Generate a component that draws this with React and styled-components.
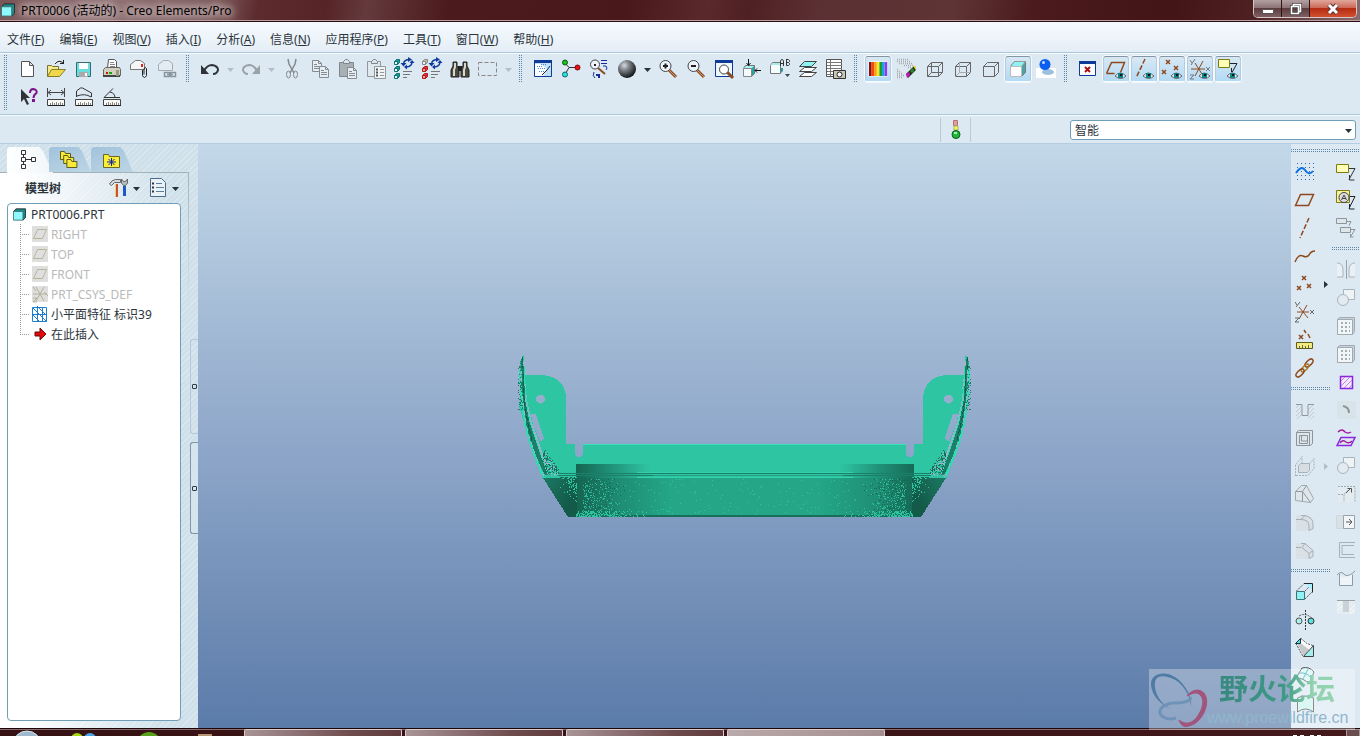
import styled, { createGlobalStyle, css } from 'styled-components';

const GlobalStyle = createGlobalStyle`
    * {
        box-sizing: border-box;
    }
    body {
        margin: 0;
        overflow: hidden;
        font-family: "Noto Sans", "Noto Sans CJK SC", sans-serif;
        font-size: 12px;
        color: #2b343b;
    }
    button {
        font: inherit;
        color: inherit;
        border: none;
        background: none;
        padding: 0;
    }
`;

const Page = styled.div`
    height: 100vh;
    display: flex;
    flex-direction: column;
    background: #dce9f3;
`;

const TitleBar = styled.header`
    display: flex;
    justify-content: space-between;
    height: 22px;
    flex: none;
    border-bottom: 1px solid #2a0c10;
    box-shadow: inset 0 -1px 0 #b9a0a2;
    background: linear-gradient(100deg, #7a5558 0%, #8f7072 8%, #7d5a5c 16%, #5c2b2e 19%, #562427 24%, #643a3c 27%, #4b1a1c 33%, #48181a 46%, #59292b 52%, #4f2023 55%, #5b3032 60%, #5f3435 70%, #4a1a1c 76%, #431517 86%, #4e2022 92%, #8a6a6c 100%);
`;

const Title = styled.h1`
    display: flex;
    align-items: center;
    gap: 6px;
    margin: 0;
    padding-left: 1px;
    height: 20px;
    font-size: 12px;
    font-weight: 400;
    color: #000;
    text-shadow: 0 0 6px #cbb9ba, 0 0 8px #cbb9ba, 0 0 10px #cbb9ba, 0 0 12px #cbb9ba;
`;

const WindowButtons = styled.div`
    display: flex;
    height: 18px;
    margin-right: 3px;
    border: 1px solid #d5c6c8;
    border-top: none;
    border-radius: 0 0 5px 5px;
    overflow: hidden;
`;

const WindowButton = styled.button`
    display: flex;
    align-items: center;
    justify-content: center;
    width: ${(props) => (props.$close ? '46px' : '28px')};
    border-right: 1px solid #2f1315;
    background: ${(props) =>
        props.$close
            ? 'linear-gradient(#e0a79b, #cc6a58 45%, #b52c12 50%, #d2502f)'
            : 'linear-gradient(#b3a0a2, #8d7476 45%, #5d3c3f 50%, #7e6063)'};
    &:last-child {
        border-right: none;
    }
`;

const MenuBar = styled.nav`
    display: flex;
    align-items: center;
    height: 31px;
    flex: none;
    gap: 15px;
    padding: 6px 7px 0;
    background: linear-gradient(#f5fafe, #e5eef6);
    border-bottom: 1px solid #a9c6da;
`;

const MenuItem = styled.button`
    line-height: 20px;
    white-space: nowrap;
`;

const Toolbars = styled.div`
    display: flex;
    flex: none;
    height: 62px;
    padding-top: 1px;
    border-top: 1px solid #f8fbfd;
    border-bottom: 1px solid #a9c6da;
`;

const Grip = styled.div`
    flex: none;
    width: 14px;
    padding: 0 7px 0 4px;
    height: ${(props) => (props.$tall ? '56px' : '28px')};
    background: conic-gradient(from 270deg at 1px 1px, #5d86a3 90deg, transparent 0) 0 0 / 2px 2px content-box;
`;

const SideGrip = styled.div`
    flex: none;
    height: 14px;
    padding: 5px 0 6px;
    background: conic-gradient(from 270deg at 1px 1px, #5d86a3 90deg, transparent 0) 0 0 / 2px 2px content-box;
`;

const ToolRows = styled.div`
    display: flex;
    flex-direction: column;
`;

const ToolRow = styled.div`
    display: flex;
    height: 28px;
`;

const ToolButton = styled.button`
    display: flex;
    align-items: center;
    justify-content: center;
    flex: none;
    width: 26px;
    height: 26px;
    margin: 1px;
    ${(props) =>
        props.$on &&
        css`
            border: 1px solid #8fa3b1;
            border-color: #8496a3 #b5cbdc #f6fbff #b5cbdc;
            border-radius: 3px;
            box-shadow: 0 0 0 1px #f4f9fd;
            background: linear-gradient(#d8e8f4, #b3daf5);
        `}
`;

const ArrowButton = styled.button`
    display: flex;
    align-items: center;
    justify-content: center;
    flex: none;
    width: 13px;
    height: 28px;
`;

const StatusRow = styled.div`
    display: flex;
    align-items: center;
    justify-content: flex-end;
    height: 29px;
    flex: none;
    padding-right: 4px;
    border-top: 1px solid #f8fbfd;
    border-bottom: 1px solid #b5cde0;
`;

const Light = styled.div`
    display: flex;
    align-items: center;
    justify-content: center;
    width: 31px;
    height: 24px;
    margin-right: 99px;
    border: 1px solid #b9cad6;
    border-width: 0 1px;
`;

const FilterBox = styled.label`
    position: relative;
    width: 286px;
    height: 20px;
    svg {
        position: absolute;
        right: 4px;
        top: 7px;
        pointer-events: none;
    }
`;

const FilterSelect = styled.select`
    appearance: none;
    display: block;
    width: 100%;
    height: 20px;
    padding: 1px 4px 0;
    font: inherit;
    color: inherit;
    background: #fff;
    border: 1px solid #6f9fb8;
    border-radius: 3px;
`;

const Main = styled.main`
    display: flex;
    flex: 1;
    min-height: 0;
`;

const Sidebar = styled.aside`
    display: flex;
    flex: none;
    width: 198px;
    padding-top: 3px;
    background: repeating-linear-gradient(135deg, #dae8ef 0 1px, #cfe0ea 1px 4px);
`;

const TreePanel = styled.div`
    display: flex;
    flex-direction: column;
    width: 189px;
`;

const Tabs = styled.div`
    display: flex;
    height: 26px;
    flex: none;
    padding-left: 7px;
    border-bottom: 1px solid #a3b1ba;
`;

const Tab = styled.button`
    display: flex;
    align-items: center;
    width: ${(props) => (props.$active ? '46px' : '42px')};
    height: ${(props) => (props.$active ? '26px' : '25px')};
    margin-right: ${(props) => (props.$active ? '-4px' : '0')};
    padding-left: ${(props) => (props.$active ? '11px' : '10px')};
    border-radius: 4px 0 0 0;
    clip-path: polygon(0 0, 70% 0, 78% 15%, 100% 100%, 0 100%);
    background: ${(props) => (props.$active ? 'linear-gradient(90deg, #fff, #f1f6f9)' : 'linear-gradient(160deg, #a2c3dc, #bcd5e4)')};
`;

const TreeBody = styled.section`
    display: flex;
    flex-direction: column;
    flex: 1;
    padding: 0 7px 7px;
    background: linear-gradient(90deg, #fff 10%, #fff0 90%) no-repeat;
    border-right: 1px solid #a9bcc8;
    border-image: linear-gradient(#a3b1ba, #c5d6e0 15%, transparent 25%) 1;
    border-width: 0 1px 0 0;
`;

const TreeHeader = styled.div`
    display: flex;
    align-items: center;
    height: 30px;
    padding: 0 2px 0 18px;
    h2 {
        flex: 1;
        margin: 0;
        font-size: 12px;
        font-weight: 700;
    }
`;

const HeaderButton = styled.button`
    display: flex;
    align-items: center;
    gap: 4px;
    margin-left: 8px;
`;

const TreeBox = styled.div`
    flex: 1;
    width: 174px;
    padding: 0 4px;
    background: #fff;
    border: 1px solid #6f9fb8;
    border-radius: 4px;
`;

const TreeRoot = styled.div`
    display: flex;
    align-items: center;
    gap: 5px;
    height: 20px;
    padding-left: 1px;
`;

const TreeList = styled.ul`
    list-style: none;
    margin: 0 0 0 8px;
    padding: 0;
    background: linear-gradient(#999 50%, transparent 0) 0 0 / 1px 2px repeat-y;
`;

const TreeItem = styled.li`
    display: flex;
    align-items: center;
    gap: 1px;
    height: 20px;
    white-space: nowrap;
    color: ${(props) => (props.$dim ? '#b9b9b9' : '#2b343b')};
    &::before {
        content: "";
        width: 9px;
        height: 1px;
        background: repeating-linear-gradient(90deg, #999 0 1px, transparent 1px 2px);
    }
    &:last-child {
        background: linear-gradient(#fff, #fff) 0 11px / 1px 9px no-repeat;
    }
`;

const Sashes = styled.div`
    display: flex;
    flex-direction: column;
    align-items: flex-end;
    gap: 8px;
    width: 9px;
    padding-top: 192px;
`;

const Sash = styled.div`
    display: flex;
    align-items: center;
    justify-content: center;
    width: 8px;
    height: ${(props) => (props.$strong ? '92px' : '95px')};
    border: 1px solid ${(props) => (props.$strong ? '#7e96a6' : '#b2cbdc')};
    border-right: none;
    border-radius: 3px 0 0 3px;
    background: ${(props) => (props.$strong ? '#d5e5ee' : 'transparent')};
    &::before {
        content: "";
        width: 3px;
        height: 3px;
        border: 1px solid #2c3b48;
        border-radius: 1px;
    }
`;

const Viewport = styled.div`
    display: flex;
    align-items: center;
    justify-content: center;
    flex: 1;
    background: linear-gradient(#c3d8e8, #90a8ca 50%, #5b7ba9);
`;

const SideTools = styled.aside`
    display: flex;
    flex: none;
    width: 69px;
    gap: 1px;
`;

const SideColumn = styled.div`
    width: ${(props) => props.$width};
`;

const Watermark = styled.div`
    position: absolute;
    right: 5px;
    bottom: 6px;
    display: flex;
    width: 206px;
    height: 61px;
    background: rgba(255, 255, 255, 0.32);
    svg {
        flex: none;
    }
`;

const WatermarkText = styled.div`
    display: flex;
    flex-direction: column;
    margin-left: -2px;
    strong {
        padding-left: 12px;
        font-size: 29px;
        line-height: 40px;
        font-weight: 700;
        color: transparent;
        background: linear-gradient(90deg, #37857f, #3e9a85 55%, #93d3b1 75%);
        background-clip: text;
    }
    span {
        font-family: "Liberation Sans", sans-serif;
        font-size: 16px;
        line-height: 18px;
        color: #8fb6cc;
    }
`;

const Taskbar = styled.footer`
    display: flex;
    height: 8px;
    flex: none;
    overflow: hidden;
    border-top: 1px solid #1c0507;
    box-shadow: inset 0 1px 0 #8c6c6e;
    background: linear-gradient(90deg, #371215, #3a1518 60%, #43191c);
`;

const Launchers = styled.div`
    display: flex;
    width: 244px;
    padding: 1px 0 0 11px;
`;

const Task = styled.div`
    width: 158px;
    margin-right: 3px;
    border: 1px solid #d9cccd;
    border-bottom: none;
    border-radius: 2px 2px 0 0;
    background: ${(props) =>
        props.$light ? 'linear-gradient(90deg, #b9a9aa, #a58f91)' : 'linear-gradient(90deg, #a89495, #6d4a4c 70%, #5f3b3d)'};
`;

const Tray = styled.div`
    display: flex;
    margin-left: auto;
    gap: 24px;
`;

const ShowDesktop = styled.button`
    width: 14px;
    border: 1px solid #a89899;
    border-bottom: none;
    background: #6b4d50;
`;

/* ---- icons, 20 x 20 grid ---- */

const brown = '#8e4a1e';
const ln = (d, stroke = '#555', extra = {}) => <path d={d} fill="none" stroke={stroke} {...extra} />;
const dash = { strokeDasharray: '2 1' };

const smallCube = (dy, face, side, line) => (
    <g transform={`translate(0 ${dy})`}>
        <path d="M.5 2.500l2-2h3v3l-2 2z" fill={side} stroke={line} />
        <path d="M.5 2.500h3v3h-3z" fill={face} stroke={line} />
    </g>
);
const ruler = (
    <>
        <path d="M1.500 12.500h17v6h-17z" fill="#f8f8f4" stroke="#444" />
        <path d="M2 18.500h17" stroke="#222" />
        {ln('M4.500 18v-2M6.500 18v-3M8.500 18v-2M10.500 18v-3M12.500 18v-2M14.500 18v-3M16.500 18v-2', '#888')}
    </>
);
const eye = (
    <>
        <path d="M9 17q5-6 11 0q-5 5-11 0z" fill="#e8e8e8" stroke="#666" />
        <path d="M12 14h5v5h-5z" fill="#128282" />
        <path d="M14 15h2v2h-2z" fill="#013" />
    </>
);
const magnifier = (
    <>
        <path d="M11 11l7 7" stroke="#8a4c24" strokeWidth="3" />
        <path d="M11 11l7 7" stroke="#d39a70" />
        <circle cx="7.500" cy="7" r="5.500" fill="#eef5fa" stroke="#444" />
    </>
);
const x = (cx, cy, color = brown) => ln(`M${cx - 2} ${cy - 2}l4 4M${cx + 2} ${cy - 2}l-4 4`, color, { strokeWidth: 1.5 });
const page = (px, py, c) => (
    <g transform={`translate(${px} ${py})`} stroke={c} fill="#e6eef3">
        <path d="M.5.5h6l3 3v8h-9zM6.500.5v3h3" />
        <path d="M2 4.500h3M2 6.500h6M2 8.500h6" />
    </g>
);
const wire = (
    <path d="M3.500 7.500l4-4h11v10l-4 4h-11zM3.500 7.500h11v10M14.500 7.500l4-4" fill="none" stroke="#666" />
);
const regen = (face, side, line) => (
    <>
        {smallCube(0, '#e8f8f8', side === '#e03030' ? '#bbb' : side, side === '#e03030' ? '#888' : line)}
        {smallCube(7, face, side, line)}
        {smallCube(14, face, side, line)}
        {ln('M9.500 5q.5-4 5-4.500M18 3q0 4-5 5', '#103d9c', { strokeWidth: 1.5 })}
        <path d="M14-2l4 2.500-4 2.500zM6.500 4h6l-3 3.500zM15.500 4h5l-2.500-3zM13 5.500v5l-3-2.500z" fill="#103d9c" />
        {ln('M9 12.500h9M9 15.500h7M9 18.500h4', '#777')}
    </>
);
const hatch = (c) => ln('M1 8l3-3M1 12l6-6M1 16l6-6M2 19l5-5M13 10l5-5M13 14l6-6M13 18l6-6M16 19l3-3', c);

const icons = {
    part: (
        <>
            <path d="M3.500 6.500l3-3h11v10l-3 3" fill="#178c8c" stroke="#222" />
            <path d="M3.500 6.500h11v10h-11z" fill="#8ff8fb" stroke="#3a6f70" />
        </>
    ),
    newFile: <path d="M3.500 2.500h8l4 4v11h-12zM11.500 2.500v4h4" fill="#fff" stroke="#555" />,
    open: (
        <>
            <path d="M1.500 17.500v-11h4l1 1h6v3" fill="#f7e98e" stroke="#77712b" />
            <path d="M1.500 17.500l4-7h14l-6 7z" fill="#efd84c" stroke="#8a7d1f" />
            {ln('M9 5q4-5 8-1M17.500 1v4M14 4.500h4', '#222')}
        </>
    ),
    save: (
        <>
            <path d="M2.500 3.500h14v14h-14z" fill="#6adede" stroke="#2f6e72" />
            <path d="M5 4h9v6h-9z" fill="#fff" />
            <path d="M5 13h9v5h-9z" fill="#aaa" />
            <path d="M11 14h2v3h-2z" fill="#fff" />
        </>
    ),
    print: (
        <>
            <path d="M5.500 9.500l1-9h6l2 2v7" fill="#fff" stroke="#555" />
            {ln('M8 3.500h4M8 5.500h5M8 7.500h5', '#888')}
            <path d="M1.500 10.500l2-2h14l1 2v6h-17z" fill="#d2cfc0" stroke="#666" />
            <path d="M1 16h17v2h-17z" fill="#444" />
            <path d="M4 13h2v2h-2z" fill="#c11" />
            <path d="M7 13h3v2h-3z" fill="#1a1" />
            <path d="M14 11h3v6h-3z" fill="#9a9782" />
        </>
    ),
    mail: (
        <>
            <path d="M.5 10.500v-5l5-4h5l4 3v6z" fill="#f4f6f7" stroke="#777" />
            <path d="M11 5h2v3h-2z" fill="#d22" />
            <path d="M12.500 11v5.500q2 4 4 0v-7q-1.500-2-2.500 0v6" fill="none" stroke="#222" />
        </>
    ),
    mailLink: (
        <>
            <path d="M.5 11.500v-6l5-4h5l4 3v7z" fill="#e2ecf2" stroke="#a2abb1" />
            <path d="M6.500 13.500h5v4h-5zM12.500 13.500h5v4h-5zM9 15.500h6" fill="none" stroke="#87939b" strokeWidth="1.500" />
        </>
    ),
    undo: (
        <>
            {ln('M4 12q3-6 8-6q6 1 6 5q-1 4-5 4', '#2f3338', { strokeWidth: 2 })}
            <path d="M1 6v9h8z" fill="#2f3338" />
        </>
    ),
    redo: (
        <>
            {ln('M16 12q-3-6-8-6q-6 1-6 5q1 4 5 4', '#9aa2a8', { strokeWidth: 2 })}
            <path d="M19 6v9h-8z" fill="#9aa2a8" />
        </>
    ),
    cut: (
        <>
            {ln('M6 0l1 5l5 9M14 0l-1 5l-5 9', '#83898e', { strokeWidth: 1.5 })}
            <ellipse cx="6.500" cy="15.500" rx="2" ry="3.500" fill="none" stroke="#83898e" />
            <ellipse cx="13.500" cy="15.500" rx="2" ry="3.500" fill="none" stroke="#83898e" />
        </>
    ),
    copy: (
        <>
            {page(2, 1, '#848c92')}
            {page(9, 7, '#848c92')}
        </>
    ),
    paste: (
        <>
            <path d="M1.500 3.500h14v14h-14z" fill="#a9b0b5" stroke="#7f878c" />
            <path d="M5.500 4.500v-2l2-2h2l2 2v2z" fill="#dde5ea" stroke="#7f878c" />
            {page(9, 8, '#848c92')}
        </>
    ),
    pasteSpecial: (
        <>
            <path d="M1.500 2.500h13v15h-13z" fill="#dfe8ee" stroke="#92999e" />
            <path d="M5.500 4.500v-2l2-2h2l2 2v2z" fill="#dde5ea" stroke="#7f878c" />
            <path d="M8.500 7.500h11v12h-11z" fill="#eef3f6" stroke="#92999e" />
            {ln('M10 10.500h2M10 13.500h2M10 16.500h2', '#555', { strokeWidth: 2 })}
            {ln('M14 10.500h4M14 13.500h4M14 16.500h4', '#999')}
        </>
    ),
    regen: regen('#eaffff', '#1a9a94', '#12716e'),
    regenAll: regen('#ff9a9a', '#e03030', '#b31c1c'),
    find: (
        <>
            <path d="M3 3h4v4l2 3v8h-8v-7l2-4zM13 3h4v4l2 4v7h-8v-8l2-3z" fill="#4b4a40" stroke="#222" />
            <path d="M8 7h4v5h-4z" fill="#222" />
            {ln('M5 4v4l-1 3v6M15 4v4l-1 3v6', '#d8d8c8', { strokeWidth: 2 })}
        </>
    ),
    select: ln('M.5 3.500h18v13h-18z', '#888', { strokeDasharray: '4 2' }),
    repaint: (
        <>
            <path d="M1.500 1.500h17v16h-17z" fill="#bfe0f8" stroke="#0d3b96" />
            <path d="M1 1h18v3h-18z" fill="#0d3b96" />
            <path d="M2 17v-12h6l6 5-4 7z" fill="#fff" />
            {ln('M4 7.500h5M5 9.500h8M6 12.500h5M8 5.500h6', '#3a8ee0', { strokeDasharray: '1 1' })}
            {ln('M9 16l5-5M14 11l3-4', '#223')}
        </>
    ),
    spin: (
        <>
            {ln('M4 4l4 4.500h8M8 8.500l-4 7', '#333')}
            <circle cx="4" cy="3.500" r="2.500" fill="#17c21d" stroke="#0a5a0d" />
            <circle cx="16.500" cy="8.500" r="2.500" fill="#e11" stroke="#7a0a0a" />
            <circle cx="4" cy="15.500" r="2.500" fill="#2de0e0" stroke="#0a6a6a" />
        </>
    ),
    orient: (
        <>
            <path d="M9 9l7 6" stroke="#8a4c24" strokeWidth="2" />
            <circle cx="6" cy="5.500" r="4.500" fill="#eef5fa" stroke="#444" />
            <path d="M5 5h2v2h-2z" fill="#222" />
            {ln('M12 1.500h6M12 4.500h6M14 7h3q2 2 0 4M5 13q-2 4 1 6', '#162a9c')}
            <path d="M7 15h4v4h-2v-2h-2z" fill="#162a9c" />
        </>
    ),
    sphere: (
        <>
            <radialGradient id="sphere" cx="0.35" cy="0.3" r="0.7">
                <stop offset="0" stopColor="#d5dade" />
                <stop offset="0.4" stopColor="#7b8186" />
                <stop offset="1" stopColor="#16191c" />
            </radialGradient>
            <circle cx="10" cy="10" r="9" fill="url(#sphere)" />
        </>
    ),
    zoomIn: (
        <>
            {magnifier}
            {ln('M5 7h5M7.500 4.500v5', '#222', { strokeWidth: 2 })}
        </>
    ),
    zoomOut: (
        <>
            {magnifier}
            {ln('M5 7h5', '#222', { strokeWidth: 2 })}
        </>
    ),
    refit: (
        <>
            <path d="M1.500 1.500h17v16h-17z" fill="#eef6fb" stroke="#0d3b96" />
            <path d="M1 1h18v3h-18z" fill="#0d3b96" />
            <path d="M13 13l6 6" stroke="#8a4c24" strokeWidth="3" />
            <circle cx="10" cy="10.500" r="4.500" fill="#fff" stroke="#444" />
        </>
    ),
    reorient: (
        <>
            <path d="M1.500 9.500l2-3h9v8l-3 3" fill="#22a8a2" stroke="#777" />
            <path d="M1.500 9.500h8v8h-8z" fill="#f4fbfb" stroke="#888" />
            <path d="M3 8l1-1h8l-2 2h-8z" fill="#a9f2f2" />
            {ln('M6.500 0v6M4.500 4l2 2.500l2-2.500M19 11.500h-6M15 9.500l-2 2l2 2', '#111')}
        </>
    ),
    savedViews: (
        <>
            <path d="M.5 6.500l2-3h8v11h-10z" fill="#f4fbfb" stroke="#777" />
            <path d="M1 6l2-2h8v2z" fill="#a9ecec" />
            {ln('M10.500 7v-5l1-1.500h1l1 1.500v5M10.500 4.500h3M16.500 0v6.500h2l1-1v-1l-1-1l1-1v-1l-1-1h-2M16.500 3.500h2', '#333')}
            <path d="M15 15h5l-2.500 3z" fill="#444" />
            <path d="M11 9h2v3l-2 2z" fill="#2a9a9a" />
        </>
    ),
    layers: (
        <>
            <path d="M1.500 17.500l5-4h12l-5 4z" fill="#fff" stroke="#444" />
            <path d="M1.500 12.500l5-4h12l-5 4z" fill="#fff" stroke="#444" />
            <path d="M1.500 7.500l5-5h12l-5 5z" fill="#8df3f3" stroke="#444" />
        </>
    ),
    viewMgr: (
        <>
            <path d="M.5.5h15v17h-15z" fill="#fff" stroke="#555" />
            {ln('M1 3.500h15M1 6.500h15M1 9.500h15M1 12.500h7M1 15.500h7M4.500 1v16', '#777')}
            <path d="M7.500 11.500h12v8h-12z" fill="#c9c7b8" stroke="#333" />
            <circle cx="13.500" cy="15.500" r="2.500" fill="#fff" stroke="#222" />
        </>
    ),
    palette: (
        <>
            <path d="M.5 2.500h19v15h-19z" fill="#fff" />
            {['#8c0f0a', '#f4480b', '#ff9b11', '#f6e81a', '#1a9c2b', '#1ba0e8', '#8a3bf0'].map((c, i) => (
                <rect key={c} x={1 + i * 2.6} y="3" width="2.600" height="14" fill={c} />
            ))}
        </>
    ),
    erase: (
        <>
            {ln('M1 .5h12M1 2.500h14M3 4.500h14M8 6.500h9M12 8.500h4M1 10.500h2M1 12.500h4M1 14.500h6M1 16.500h8M1 18.500h6', '#a9abad', { strokeDasharray: '1 1', strokeWidth: 1.5 })}
            <path d="M10 15l8-8 2 4-8 8z" fill="#26331e" />
            <path d="M10 15l3-2 1 3-3 3z" fill="#c015c0" />
            <path d="M14 12l3-3 1 3-2 2z" fill="#2a8c2a" />
            <path d="M17 7h3v4z" fill="#e8d835" />
        </>
    ),
    wireframe: (
        <>
            {wire}
            {ln('M7.500 3.500v10h11M3.500 17.500l4-4', '#666')}
        </>
    ),
    hidden: (
        <>
            {wire}
            {ln('M7.500 3.500v10h11M3.500 17.500l4-4', '#aaa')}
        </>
    ),
    noHidden: wire,
    shaded: (
        <>
            <path d="M2.500 7.500l4-5h11v11l-4 4" fill="#4aa5a5" stroke="#777" />
            <path d="M2.500 7.500l4-5h11l-4 5z" fill="#8ff3f5" stroke="#999" />
            <path d="M2.500 7.500h11v10h-11z" fill="#fff" stroke="#bbb" />
        </>
    ),
    realism: (
        <>
            <path d="M0 9h20v10h-20z" fill="#fff" />
            <ellipse cx="12" cy="13" rx="6" ry="3" fill="#9dbfe0" />
            <circle cx="9" cy="5.500" r="5.500" fill="#0b5ef0" />
            <circle cx="7.500" cy="3.500" r="1.500" fill="#bfe0ff" />
        </>
    ),
    closeWin: (
        <>
            <path d="M1.500 2.500h16v14h-16z" fill="#fff" stroke="#0d3b96" />
            <path d="M1 2h17v3h-17z" fill="#0d3b96" />
            {ln('M7 8l5 5M12 8l-5 5', '#a11', { strokeWidth: 2 })}
        </>
    ),
    planeEye: (
        <>
            {ln('M.5 14.500l5-11h13l-4 10M.5 14.500h8', brown, { strokeWidth: 1.5 })}
            {eye}
        </>
    ),
    axisEye: (
        <>
            {ln('M11 0l-9 19', brown, { strokeDasharray: '5 2', strokeWidth: 1.5 })}
            {eye}
        </>
    ),
    pointEye: (
        <>
            {x(6, 3)}
            {x(2, 13)}
            {x(14, 9)}
            {eye}
        </>
    ),
    csysEye: (
        <>
            {ln('M1 10h14M5 4l7 11M13 2l-8 15', brown)}
            {ln('M0 1l2 3M5 0l-4 6M0 16h4l-4 4h4M16 8l4 4M20 8l-4 4', '#777')}
            {eye}
        </>
    ),
    noteEye: (
        <>
            <path d="M.5.5h11v8h-11z" fill="#ffffb8" stroke="#7c7c10" />
            {ln('M12 4.500h7l-5 9M13.500 9v4', '#222')}
            {eye}
        </>
    ),
    help: (
        <>
            <path d="M3 2v13l3-3 3 6 2-1-3-6h4z" fill="#2f3338" />
            {ln('M12 6q0-4 3.500-4q4 1 3 4q-3 2-3 5', '#7c1288', { strokeWidth: 2 })}
            <path d="M14 12h3v3h-3z" fill="#7c1288" />
        </>
    ),
    measure: (
        <>
            {ruler}
            {ln('M1.500 1v9M18.500 1v9M2 5.500h16M5 3l-3 2.500l3 2.500M15 3l3 2.500l-3 2.500', '#444')}
        </>
    ),
    measureCurve: (
        <>
            {ruler}
            {ln('M2.500 10v-6l4-3h2l9 5v4M3 9q8-3 14 1', '#333')}
        </>
    ),
    measureAngle: (
        <>
            {ruler}
            {ln('M2 10.500h16M2 10.500l9-9M8 5q5 1 5 6', '#333')}
        </>
    ),
    treeTab: ln('M3.500.5h4v4h-4zM3.500 7.500h4v4h-4zM3.500 14.500h4v4h-4zM13.500 7.500h4v4h-4zM5.500 5v2M5.500 12v2M8 9.500h5', '#333'),
    foldersTab: (
        <>
            {[0, 4, 8].map((o) => (
                <path key={o} d={`M${1.5 + o * 0.8} ${9.5 + o}v-8h4l1 2h5v6z`} fill="#f7ea3a" stroke="#5d5a1a" />
            ))}
        </>
    ),
    favTab: (
        <>
            <path d="M2.500 17.500v-13h5l1 2h10v11z" fill="#f9ef35" stroke="#6b6724" />
            {ln('M10.500 8v8M6 12h9M7.500 9l6 6M13.500 9l-6 6', '#14229c')}
        </>
    ),
    tools: (
        <>
            <path d="M.5 6q2-4 6-4.500h5v3h-6l-3 3z" fill="#d5dbdf" stroke="#666" />
            <path d="M6 6h3v13h-3z" fill="#d0502a" />
            <path d="M6 6h1v13h-1z" fill="#e8d27a" />
            <path d="M14 8h3v10h-3z" fill="#1a5ac8" />
            <path d="M12.500 1v4l2 2.500h2l2-2.500v-4l-2 2.500h-2z" fill="#b5bec4" stroke="#666" />
        </>
    ),
    list: (
        <>
            <path d="M2.500.5h11l4 4v14h-15z" fill="#eaf2f8" stroke="#4b6b86" />
            {ln('M8 5.500h6M8 9.500h8M8 13.500h8', '#5a7fa0')}
            {ln('M4 5.500h2M4 9.500h2M4 13.500h2', '#333', { strokeWidth: 2 })}
        </>
    ),
    planeDim: (
        <>
            <path d="M2 2h16v16h-16z" fill="#dfdfdf" />
            {ln('M3.500 14.500l4-9h9l-4 9z', '#b9b59c')}
        </>
    ),
    csysDim: (
        <>
            <path d="M2 2h16v16h-16z" fill="#dfdfdf" />
            {ln('M3 10h14M6 3l8 14M14 3l-8 14M3 3l3 4M3 14h4l-4 4h4M14 8l4 4', '#b5b196')}
        </>
    ),
    facet: (
        <>
            <path d="M2.500 3.500h14v14h-14z" fill="#fff" stroke="#1a7fd0" />
            {ln('M7.500 2v16M12.500 3v15M2 10.500h15M3 4l13 13M8 3l8 8M3 11l7 7', '#1a7fd0')}
        </>
    ),
    insert: <path d="M5 8h5v-4l6 6-6 6v-4h-5z" fill="#e00808" stroke="#6d0a0a" />,
    sketch: (
        <>
            {ln('M2 1.500h17M2 5.500h17M2 9.500h17M2 13.500h17M2 17.500h17', '#2b6aa8', { strokeDasharray: '1 3' })}
            {ln('M1 11q5-8 9-3q4 6 8 1', '#0e72e0', { strokeWidth: 2 })}
        </>
    ),
    plane: ln('M.5 15.500l5-11h13l-5 11z', brown, { strokeWidth: 1.5 }),
    axis: ln('M14 0l-9 20', brown, { strokeDasharray: '5 2', strokeWidth: 1.5 }),
    curve: ln('M0 16q3-8 8-6q4 2 6-1q2-4 6-4', brown, { strokeWidth: 1.5 }),
    points: (
        <>
            {x(9, 4)}
            {x(4, 14)}
            {x(14, 12)}
        </>
    ),
    csys: (
        <>
            {ln('M2 10h12M4 5l9 11M12 3l-8 14', brown)}
            {ln('M0 0l2 3M5 0l-4 5M0 16h4l-4 4h4M15 8l4 4M19 8l-4 4', '#666')}
        </>
    ),
    analysis: (
        <>
            {x(6, 7)}
            {ln('M9 0l2 3M13 4l2 4', brown, { strokeWidth: 1.5 })}
            <path d="M1.500 12.500h16v6h-16z" fill="#f3ea7a" stroke="#5f5a20" />
            {ln('M4.500 18v-2M7.500 18v-3M10.500 18v-2M13.500 18v-3', '#666')}
        </>
    ),
    chain: (
        <>
            <ellipse cx="14" cy="5" rx="5" ry="2.500" transform="rotate(-45 14 5)" fill="none" stroke={brown} strokeWidth="1.500" />
            <ellipse cx="10" cy="10" rx="5" ry="2" transform="rotate(-45 10 10)" fill="none" stroke="#a8791e" strokeWidth="1.500" />
            <ellipse cx="5" cy="15" rx="5" ry="2.500" transform="rotate(-45 5 15)" fill="none" stroke={brown} strokeWidth="1.500" />
        </>
    ),
    hole: (
        <>
            {hatch('#c3cacf')}
            {ln('M1 4.500h6v11h6v-11h6', '#8f989e')}
        </>
    ),
    shell: (
        <>
            <path d="M1.500 4.500l2-2h14v13l-2 2h-14z" fill="#dde6eb" stroke="#8b959b" />
            {ln('M1.500 4.500h13v13M4.500 7.500h8v8h-8zM6.500 7v6h6', '#8b959b')}
        </>
    ),
    rib: (
        <>
            {ln('M1 8.500l6-8v9M1 19.500h12l6-7v-10l-6 7M.5 9v11', '#a9b2b8', { strokeDasharray: '2 1' })}
            <path d="M3.500 9.500l2-2h9v7l-2 2h-9z" fill="#d6dee3" stroke="#aab2b7" />
        </>
    ),
    draft: (
        <>
            <path d="M.5 7.500l6-6h5l7 13-3 4-15-2z" fill="#dfe7eb" stroke="#a0aab0" />
            {ln('M.5 7.500h7l4-6M7.500 7.500l8 11M7.500 8v9', '#8f999f')}
        </>
    ),
    round: (
        <>
            <path d="M1 3h8q9 2 9 8v5l-4 3h-13z" fill="#d9e1e6" />
            {ln('M6 3.500h4q8 2 8 8v5l-4 2v-4q0-7-8-7l4-4M1 7.500h5', '#a5aeb4')}
        </>
    ),
    chamfer: (
        <>
            <path d="M1 3h9l8 8v5l-4 3h-13z" fill="#d9e1e6" />
            {ln('M6 3.500h4l8 7v6l-4 2v-5l-7-6l3-4M14 13.500l4-3M1 7.500h5', '#a5aeb4')}
        </>
    ),
    extrude: (
        <>
            <path d="M1.500 9.500h8v8h-8z" fill="#8ff3f5" stroke="#3c7272" />
            {ln('M1.500 9l7-7M10 17l8-8M10 9l7-7', '#555', dash)}
            {ln('M9 1.500h8.500v9', '#222')}
            <path d="M11 2h6v6z" fill="#aef" />
        </>
    ),
    revolve: (
        <>
            <circle cx="4" cy="11" r="3" fill="#aee" stroke="#555" />
            <circle cx="16" cy="11" r="3" fill="#5fe0e0" stroke="#333" />
            {ln('M10.500 0v20', '#333', dash)}
            {ln('M4 6q5-3 10 0l4 3', '#555', dash)}
        </>
    ),
    sweep: (
        <>
            <path d="M1 5l5-4.500 12.500 7v11h-10z" fill="#f7f9fa" />
            <path d="M2 5.500h4l8 6-5 7z" fill="#c6c8ca" />
            <path d="M18.500 7.500v11h-10z" fill="#a5ecef" stroke="#444" />
            {ln('M6 .5l6 5l6 2M1 5.500l7 13', '#555', dash)}
            <path d="M.5 5.500l5-5v5z" fill="#5fe0e0" stroke="#134" />
        </>
    ),
    boundary: (
        <>
            <path d="M1 12l6-10q7-2 12 4l-5 12q-5-6-13-6z" fill="#d4f5f6" stroke="#555" />
            {ln('M4 7q8-1 12 5M13 3l-5 10', '#3aa')}
        </>
    ),
    style: <path d="M2.500 4q7-4 16 0v14q-8-6-16 0z" fill="#c9f3ee" stroke="#555" />,
    note: (
        <>
            <path d="M.5 2.500h12v8h-12z" fill="#ffffb8" stroke="#7c7c10" />
            {ln('M13 6.500h6l-6 11M13.500 13v5h5', '#333')}
        </>
    ),
    noteAll: (
        <>
            <path d="M.5.5h13v12h-13z" fill="#f5f0a0" stroke="#7c7c10" />
            <circle cx="8" cy="7.500" r="5" fill="#ddd" stroke="#444" />
            {ln('M5.500 10l2.500-5l2.500 5M6 8.500h4', '#444')}
            {ln('M14 6.500h5l-6 12M13.500 14v5h5', '#222')}
        </>
    ),
    noteGrey: (
        <>
            <path d="M.5.5h10v5h-10zM4.500 9.500h10v5h-10z" fill="#dfe6ea" stroke="#8b959b" />
            {ln('M11 3.500h4l-2 4M15 11.500h4l-5 8M14.500 16v3h3', '#8b959b')}
        </>
    ),
    mirror: (
        <>
            <path d="M1 3q6 0 6 7v7h-6M19 3q-6 0-6 7v7h6" fill="#e9f1f6" stroke="#a9b4bb" />
            {ln('M10.500 0v19', '#98a2a8')}
        </>
    ),
    merge: (
        <>
            <path d="M7.500 1.500h11v10h-11z" fill="#eef3f6" stroke="#aab4bb" />
            <circle cx="7" cy="12" r="5.500" fill="#e3ebf0" stroke="#aab4bb" />
        </>
    ),
    pattern: (
        <>
            <path d="M1.500 3.500l2-2h15v14l-2 3h-15z" fill="#c9d2d8" stroke="#a0aab0" />
            <path d="M1.500 3.500h15v15h-15z" fill="#f1f6f9" stroke="#a0aab0" />
            {ln('M5 7h9M5 11h9M5 15h9', '#8b959b', { strokeDasharray: '2 2', strokeWidth: 1.5 })}
        </>
    ),
    fill: (
        <>
            <path d="M4.500 4.500h12v12h-12z" fill="#f3e8fc" stroke="#8a25e0" strokeWidth="1.500" />
            {ln('M5 9l4-4M5 14l9-9M8 16l8-8M13 16l3-3', '#b983e6')}
        </>
    ),
    intersect: (
        <>
            <path d="M1 1h19v18h-19z" fill="#d8e3ea" />
            {ln('M7 6q6 1 6 7', '#8b959b', { strokeWidth: 2 })}
        </>
    ),
    project: (
        <>
            {ln('M2 4q4-4 7 0q3 2 6 0M4 15q3-4 6-1q3 2 6-1', '#a01aa0', { strokeWidth: 1.5 })}
            {ln('M1 17.500l4-8h14l-4 8z', '#8a25e0', { strokeWidth: 1.5 })}
        </>
    ),
    extend: (
        <>
            <path d="M2 2h18v16h-18z" fill="#e2ebf0" />
            {ln('M2 2.500h17v15M2 10.500h6v7M8 10l6-5', '#a1abb1', dash)}
            {ln('M10 9l5-5M11.500 4.500h4v4', '#555')}
        </>
    ),
    offset: (
        <>
            <path d="M.5 3.500h7v13h-7z" fill="#d8e1e6" stroke="#cfd8de" />
            <path d="M7.500 3.500h11v13h-11z" fill="#f2f6f8" stroke="#98a2a8" />
            {ln('M10 10h6M13 7l3 3l-3 3', '#555')}
        </>
    ),
    thicken: ln('M18 5.500h-12v9h12M19 2.500h-15.500v15h15.500', '#a5b0b7'),
    solidify: (
        <>
            <path d="M3 6l4 3 6-1 4-3v12h-14z" fill="#eef4f7" />
            {ln('M1 7q4-5 8 0q4 2 10-4M3.500 6v11.500h13v-11', '#8f9ba2')}
        </>
    ),
    cutout: (
        <>
            <path d="M1 4h18v14h-18z" fill="#e6edf1" />
            {ln('M1 10l5-5M1 15l5-5M13 15l6-6M14 18l5-5', '#f8fbfc')}
            <path d="M7 4h6v12h-6z" fill="#c8d2d8" />
            {ln('M1 4.500h18', '#98a2a8')}
        </>
    ),
};

function Icon({ name }) {
    return (
        <svg width="20" height="20" viewBox="0 0 20 20" overflow="visible" aria-hidden="true">
            {icons[name]}
        </svg>
    );
}

function Arrow({ dim, right }) {
    return (
        <svg width="7" height="7" viewBox="0 0 7 7" aria-hidden="true">
            <path d={right ? 'M2 0v7l4-3.500z' : 'M0 2h7l-3.500 4z'} fill={dim ? '#b3bec6' : '#26313a'} />
        </svg>
    );
}

const menus = [
    ['文件', 'F'], ['编辑', 'E'], ['视图', 'V'], ['插入', 'I'], ['分析', 'A'],
    ['信息', 'N'], ['应用程序', 'P'], ['工具', 'T'], ['窗口', 'W'], ['帮助', 'H'],
];

// "|" is a grip, "v" and "-" are active and dimmed drop-down arrows, "*" marks a pressed button
const toolbar = `newFile open save print mail mailLink | undo - redo - cut copy paste pasteSpecial regen regenAll find select -
    | repaint spin orient sphere v zoomIn zoomOut refit reorient savedViews layers viewMgr
    | *palette erase wireframe hidden noHidden *shaded realism
    | closeWin *planeEye *axisEye *pointEye *csysEye *noteEye`.split(/\s+/);

const featureTools = `| sketch plane axis curve points> csys analysis chain
    | hole shell rib- draft round chamfer | extrude revolve sweep boundary style`.split(/\s+/);

const editTools = `| note noteAll noteGrey | mirror merge pattern pattern fill intersect project merge
    extend offset thicken solidify cutout`.split(/\s+/);

const features = [
    { icon: 'planeDim', name: 'RIGHT', dim: true },
    { icon: 'planeDim', name: 'TOP', dim: true },
    { icon: 'planeDim', name: 'FRONT', dim: true },
    { icon: 'csysDim', name: 'PRT_CSYS_DEF', dim: true },
    { icon: 'facet', name: '小平面特征 标识39' },
    { icon: 'insert', name: '在此插入' },
];

function Tool({ token }) {
    if (token === '|') return <Grip />;
    if (token === '-' || token === 'v') {
        return (
            <ArrowButton aria-label="more">
                <Arrow dim={token === '-'} />
            </ArrowButton>
        );
    }
    const on = token[0] === '*';
    const name = on ? token.slice(1) : token;
    return (
        <ToolButton $on={on} aria-label={name} aria-pressed={on}>
            <Icon name={name} />
        </ToolButton>
    );
}

function SideTool({ token }) {
    if (token === '|') return <SideGrip />;
    const name = token.replace(/[>-]$/, '');
    return (
        <ToolRow>
            <ToolButton aria-label={name}>
                <Icon name={name} />
            </ToolButton>
            {name !== token && (
                <ArrowButton aria-label="more">
                    <Arrow right dim={token.endsWith('-')} />
                </ArrowButton>
            )}
        </ToolRow>
    );
}

// scattered facets; density(x, y) is the chance that a pixel is set
function speckle(seed, x0, y0, w, h, density) {
    let s = seed;
    let d = '';
    for (let j = 0; j < h; j++) {
        for (let i = 0; i < w; i++) {
            s = (s * 1103515245 + 12345) % 2147483648;
            if (s / 2147483648 < density(i / w, j / h)) d += `M${x0 + i} ${y0 + j}h1v1h-1z`;
        }
    }
    return d;
}

const endFacets = speckle(7, 66, 125, 38, 38, (u, v) => 0.32 * (1 - u) * (0.4 + v * 0.6));
const endDark = speckle(11, 59, 125, 50, 38, (u) => 0.25 * (1 - u));
const floorFacets = speckle(23, 90, 125, 280, 36, () => 0.015);
const floorEdge = speckle(31, 59, 157, 70, 6, (u, v) => 0.45 * (1 - u) + 0.2 * v);
const cornerFacets = speckle(5, 42, 123, 18, 26, (u, v) => 0.6 * u * (1 - v));
const wallFacets = speckle(17, 26, 96, 16, 24, (u, v) => (u < v + 0.15 ? 0.4 : 0));
const wallHoles = speckle(41, 28, 98, 14, 24, (u, v) => (u < v + 0.1 ? 0.2 : 0));
const rimFacets = speckle(13, 1, 6, 5, 50, () => 0.25);

function ModelEnd() {
    return (
        <>
            <path d="M3 9L6 1l1 1-1 10 2 12 3 22 5 24 14 36 14 19h-18q-14-30-20-70z" fill="#2ec5a3" />
            <path d="M7 24l1 0 2 22 5 22 13 38 0 7Q14 88 9 65 6 40 7 24z" fill="#9db0ce" />
            <path d="M4 5l2 0 1 14 1 26 5 25 14 38 6 13h-5Q12 90 8 65 5 42 4 5z" fill="#1b8068" />
            <path d="M4 16q1 42 8 66 8 26 16 42" fill="none" stroke="#9db0ce" strokeDasharray="6 2" />
            <path d="M3 16q1 42 8 66 8 26 16 42" fill="none" stroke="#2fdcb5" strokeWidth="2" strokeDasharray="9 1" />
            <path d="M7 12q1 40 8 62 7 22 16 46" fill="none" stroke="#2fdcb5" />
            <path d="M5 3v12M6 20q0 34 9 66" fill="none" stroke="#115d4b" strokeDasharray="5 2" />
            <path d={rimFacets} fill="#1b8068" />
            <path d={wallFacets} fill="#187059" />
            <path d={wallHoles} fill="#9db0ce" />
            <path d="M26 124l25 39h9v-40z" fill="url(#corner)" />
            <path d={cornerFacets} fill="#2ec5a3" />
            <path d={endDark} fill="#176853" />
            <path d={endFacets} fill="#2dbb9a" />
            <path d={floorEdge} fill="#2ec5a3" />
        </>
    );
}

function Model() {
    return (
        <svg width="456" height="164" viewBox="0 0 456 164" shapeRendering="crispEdges" role="img" aria-label="PRT0006">
            <defs>
                <linearGradient id="floor">
                    <stop offset="0" stopColor="#156451" />
                    <stop offset="0.13" stopColor="#1e8d74" />
                    <stop offset="0.28" stopColor="#24a687" />
                    <stop offset="0.72" stopColor="#24a687" />
                    <stop offset="0.9" stopColor="#1e8d74" />
                    <stop offset="1" stopColor="#156a56" />
                </linearGradient>
                <linearGradient id="step">
                    <stop offset="0" stopColor="#156451" />
                    <stop offset="0.1" stopColor="#209078" />
                    <stop offset="0.22" stopColor="#2ec5a3" />
                    <stop offset="0.78" stopColor="#2ec5a3" />
                    <stop offset="0.9" stopColor="#209078" />
                    <stop offset="1" stopColor="#156a56" />
                </linearGradient>
                <linearGradient id="corner" x2="0.8" y2="0.6">
                    <stop offset="0" stopColor="#1c7a64" />
                    <stop offset="1" stopColor="#145a49" />
                </linearGradient>
            </defs>
            <path
                fillRule="evenodd"
                fill="#2ec5a3"
                d="M8 21h18q22 3 23 22v47h9v10l2 3h4l2-3v-10h323v10l2 3h4l2-3v-10h9v-47q2-20 23-22h18l-6 50-14 40-10 13h-388l-12-22-15-50z
                   M19 45a4.500 4.500 0 1 0 9 0a4.500 4.500 0 1 0-9 0zM427 45a4.500 4.500 0 1 0 9 0a4.500 4.500 0 1 0-9 0z
                   M14 60h5l8 24-2 3h-3l-7-20zM441 60h-5l-8 24 2 3h3l7-20z"
            />
            <path d="M66 90.500h323" stroke="#39dfba" />
            <path d="M59 110h338v14h-338z" fill="url(#step)" />
            <path d="M59 124h338v39h-338z" fill="url(#floor)" />
            <path d={floorFacets} fill="#2ec5a3" />
            <path d="M32 119.500h392M32 121.500h110M314 121.500h110" stroke="#1b806a" />
            <path d="M136 121.500h190" stroke="#229e82" />
            <path d="M120 118h216M120 123.500h216" stroke="#32d0ac" />
            <path d="M55 162h346" stroke="#176f5a" strokeWidth="2" />
            <ModelEnd />
            <g transform="translate(455 0) scale(-1 1)">
                <ModelEnd />
            </g>
        </svg>
    );
}

function App() {
    return (
        <Page>
            <GlobalStyle />
            <TitleBar>
                <Title>
                    <svg width="14" height="14" viewBox="3 3 15 14" aria-hidden="true">{icons.part}</svg>
                    PRT0006 (活动的) - Creo Elements/Pro
                </Title>
                <WindowButtons>
                    <WindowButton aria-label="最小化">
                        <svg width="14" height="12" viewBox="0 0 14 12"><path d="M1.500 6.500h11v4h-11z" fill="#fff" stroke="#555" /></svg>
                    </WindowButton>
                    <WindowButton aria-label="还原">
                        <svg width="14" height="14" viewBox="0 0 14 14">
                            <path d="M4.500 4V2.500h7v7h-2M2.500 4.500h7v7h-7z" fill="none" stroke="#444" strokeWidth="3" />
                            <path d="M4.500 4V2.500h7v7h-2M2.500 4.500h7v7h-7z" fill="none" stroke="#fff" strokeWidth="1.500" />
                        </svg>
                    </WindowButton>
                    <WindowButton $close aria-label="关闭">
                        <svg width="14" height="12" viewBox="0 0 14 12">
                            <path d="M3 2l8 8M11 2l-8 8" stroke="#5a3434" strokeWidth="5" />
                            <path d="M3 2l8 8M11 2l-8 8" stroke="#fff" strokeWidth="3" />
                        </svg>
                    </WindowButton>
                </WindowButtons>
            </TitleBar>
            <MenuBar>
                {menus.map(([label, key]) => (
                    <MenuItem key={key}>{label}(<u>{key}</u>)</MenuItem>
                ))}
            </MenuBar>
            <Toolbars>
                <Grip $tall />
                <ToolRows>
                    <ToolRow>
                        {toolbar.map((token, i) => <Tool key={i} token={token} />)}
                    </ToolRow>
                    <ToolRow>
                        {['help', 'measure', 'measureCurve', 'measureAngle'].map((token) => <Tool key={token} token={token} />)}
                    </ToolRow>
                </ToolRows>
            </Toolbars>
            <StatusRow>
                <Light>
                    <svg width="10" height="20" viewBox="0 0 10 20" aria-hidden="true">
                        <path d="M2.500.5h4v5h-4z" fill="#e99" stroke="#a77" />
                        <path d="M3 6h4v4h-4z" fill="#ff3" stroke="#aa8" />
                        <circle cx="5" cy="14.500" r="4" fill="#1fb83a" stroke="#0a5c18" />
                        <path d="M3 12h3v2h-3z" fill="#a8f0b0" />
                    </svg>
                </Light>
                <FilterBox>
                    <FilterSelect aria-label="过滤器">
                        <option>智能</option>
                    </FilterSelect>
                    <Arrow />
                </FilterBox>
            </StatusRow>
            <Main>
                <Sidebar>
                    <TreePanel>
                        <Tabs>
                            <Tab $active aria-label="模型树"><Icon name="treeTab" /></Tab>
                            <Tab aria-label="文件夹浏览器"><Icon name="foldersTab" /></Tab>
                            <Tab aria-label="收藏夹"><Icon name="favTab" /></Tab>
                        </Tabs>
                        <TreeBody>
                            <TreeHeader>
                                <h2>模型树</h2>
                                <HeaderButton aria-label="设置"><Icon name="tools" /><Arrow /></HeaderButton>
                                <HeaderButton aria-label="显示"><Icon name="list" /><Arrow /></HeaderButton>
                            </TreeHeader>
                            <TreeBox>
                                <TreeRoot>
                                    <svg width="13" height="13" viewBox="3 3 15 14" aria-hidden="true">{icons.part}</svg>
                                    PRT0006.PRT
                                </TreeRoot>
                                <TreeList>
                                    {features.map((f) => (
                                        <TreeItem key={f.name} $dim={f.dim}>
                                            <Icon name={f.icon} />
                                            {f.name}
                                        </TreeItem>
                                    ))}
                                </TreeList>
                            </TreeBox>
                        </TreeBody>
                    </TreePanel>
                    <Sashes>
                        <Sash />
                        <Sash $strong />
                    </Sashes>
                </Sidebar>
                <Viewport>
                    <Model />
                </Viewport>
                <SideTools>
                    <SideColumn $width="40px">
                        {featureTools.map((token, i) => <SideTool key={i} token={token} />)}
                    </SideColumn>
                    <SideColumn $width="28px">
                        {editTools.map((token, i) => <SideTool key={i} token={token} />)}
                    </SideColumn>
                </SideTools>
            </Main>
            <Taskbar>
                <Launchers>
                    <svg width="220" height="8" viewBox="0 0 220 8" aria-hidden="true">
                        <circle cx="16" cy="15" r="14" fill="#9fb9cf" stroke="#dce8f0" />
                        <circle cx="66" cy="9" r="6" fill="#a5d80e" />
                        <circle cx="79" cy="9" r="6" fill="#4aa8e8" />
                        <circle cx="138" cy="14" r="12" fill="#5aa01c" />
                        <path d="M187 4h14v4h-14z" fill="#b89474" />
                    </svg>
                </Launchers>
                <Task>
                    <svg width="50" height="7" viewBox="0 0 50 7" aria-hidden="true">
                        <ellipse cx="24" cy="8" rx="8" ry="6" fill="#eee" />
                        <circle cx="32" cy="9" r="7" fill="none" stroke="#5aba2a" strokeWidth="2" />
                    </svg>
                </Task>
                <Task />
                <Task />
                <Task $light />
                <Tray>
                    <svg width="30" height="7" viewBox="0 0 30 7" aria-hidden="true">
                        <path d="M1 6h4v1h-4zM8 6h4v1h-4zM18 6h4v1h-4zM25 6h4v1h-4z" fill="#fff" />
                    </svg>
                    <ShowDesktop aria-label="显示桌面" />
                </Tray>
            </Taskbar>
            <Watermark>
                <svg width="60" height="61" viewBox="0 0 60 61" fill="none" aria-hidden="true">
                    <path
                        d="M2 15C2 6 12 2 22 6S44 25 42 38C42 28 34 13 22 9S5 8 6 18 14 36 22 40C12 36 2 26 2 15z"
                        fill="#4f7ba4"
                    />
                    <path d="M27 49C18 52 10 47 11 42S20 34 25 34 41 34 42 28" stroke="#6f93b8" strokeWidth="3" />
                    <path
                        d="M38 27C44 19 54 19 57 28S53 52 43 56 32 55 30 51C36 56 43 55 48 48S56 32 52 27 44 24 38 27z"
                        fill="#a2557c"
                        stroke="#a2557c"
                    />
                </svg>
                <WatermarkText>
                    <strong>野火论坛</strong>
                    <span>www.proewildfire.cn</span>
                </WatermarkText>
            </Watermark>
        </Page>
    );
}

export default App;
